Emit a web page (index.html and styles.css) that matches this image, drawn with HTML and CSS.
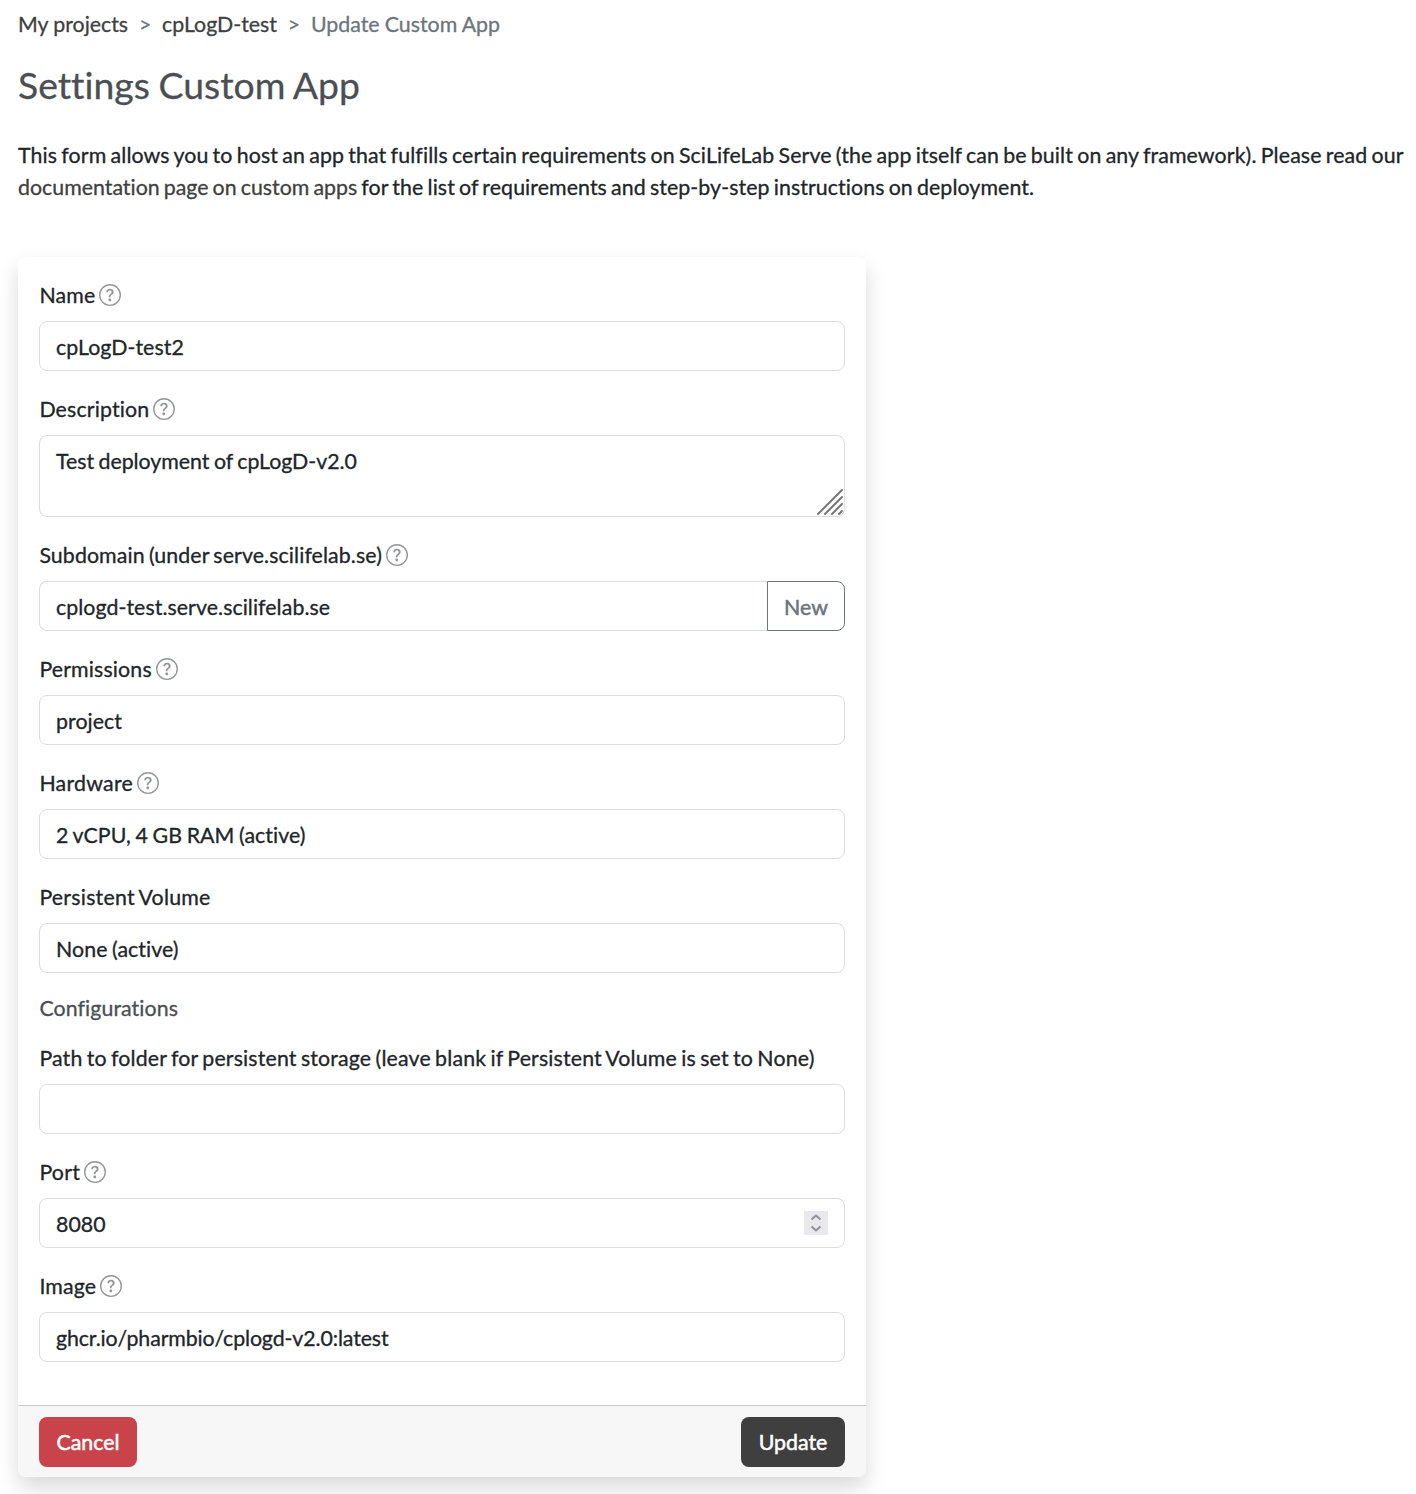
FILE: index.html
```html
<!DOCTYPE html>
<html lang="en">
<head>
<meta charset="utf-8">
<title>Update Custom App</title>
<link rel="stylesheet" href="styles.css">
</head>
<body>
<svg width="0" height="0" class="defs">
  <symbol id="help" viewBox="0 0 16 16">
    <path d="M8 15A7 7 0 1 1 8 1a7 7 0 0 1 0 14m0 1A8 8 0 1 0 8 0a8 8 0 0 0 0 16"/>
    <path d="M5.255 5.786a.237.237 0 0 0 .241.247h.825c.138 0 .248-.113.266-.25.09-.656.54-1.134 1.342-1.134.686 0 1.314.343 1.314 1.168 0 .635-.374.927-.965 1.371-.673.489-1.206 1.06-1.168 1.987l.003.217a.25.25 0 0 0 .25.246h.811a.25.25 0 0 0 .25-.25v-.105c0-.718.273-.927 1.01-1.486.609-.463 1.244-.977 1.244-2.056 0-1.511-1.276-2.241-2.673-2.241-1.267 0-2.655.59-2.75 2.286m1.557 5.763c0 .533.425.927 1.01.927.609 0 1.028-.394 1.028-.927 0-.552-.42-.94-1.029-.94-.584 0-1.009.388-1.009.94"/>
  </symbol>
</svg>
<nav class="breadcrumb"><a>My projects</a><span class="sep">&gt;</span><a>cpLogD-test</a><span class="sep">&gt;</span><span>Update Custom App</span></nav>
<h1>Settings Custom App</h1>
<p class="intro">This form allows you to host an app that fulfills certain requirements on SciLifeLab Serve (the app itself can be built on any framework). Please read our<br><a>documentation page on custom apps</a><span class="rest"> for the list of requirements and step-by-step instructions on deployment.</span></p>
<main class="card">
  <div class="card-body">
    <div class="field"><div class="label">Name<svg class="help"><use href="#help"/></svg></div><div class="control">cpLogD-test2</div></div>
    <div class="field"><div class="label">Description<svg class="help"><use href="#help"/></svg></div><div class="control area">Test deployment of cpLogD-v2.0<svg class="grip" viewBox="0 0 28 28"><path d="M2 26 26 2M9 26 26 9M16 26 26 16M23 26 26 23"/></svg></div></div>
    <div class="field"><div class="label domain">Subdomain (under serve.scilifelab.se)<svg class="help"><use href="#help"/></svg></div><div class="group"><div class="control">cplogd-test.serve.scilifelab.se</div><div class="new">New</div></div></div>
    <div class="field"><div class="label">Permissions<svg class="help"><use href="#help"/></svg></div><div class="control">project</div></div>
    <div class="field"><div class="label short">Hardware<svg class="help"><use href="#help"/></svg></div><div class="control">2 vCPU, 4 GB RAM (active)</div></div>
    <div class="field"><div class="label short">Persistent Volume</div><div class="control">None (active)</div></div>
    <div class="section">Configurations</div>
    <div class="field"><div class="label">Path to folder for persistent storage (leave blank if Persistent Volume is set to None)</div><div class="control"></div></div>
    <div class="field"><div class="label short">Port<svg class="help"><use href="#help"/></svg></div><div class="control">8080<svg class="spin" viewBox="0 0 24 24"><path d="m7.500 8.500 4.500-4 4.500 4M7.500 15.500l4.500 4 4.500-4"/></svg></div></div>
    <div class="field"><div class="label">Image<svg class="help"><use href="#help"/></svg></div><div class="control path">ghcr.io/pharmbio/cplogd-v2.0:latest</div></div>
  </div>
  <footer class="card-footer"><div class="btn cancel">Cancel</div><div class="btn update">Update</div></footer>
</main>
</body>
</html>
```
FILE: styles.css
```css
* { box-sizing: border-box; }
body {
  margin: 0;
  padding: 8px 0 0 18px;
  height: 1494px;
  overflow: hidden;
  background: #fff;
  color: #212529;
  font: 21.333px/32px Lato, "Liberation Sans", sans-serif;
  -webkit-text-stroke: .3px currentColor;
}
.defs { position: absolute; }
svg { -webkit-text-stroke: 0; }
a { color: #3f3f3f; }
.breadcrumb { display: flex; height: 32px; color: #6c757d; word-spacing: -.2px; }
.sep { width: 34px; text-align: center; }
h1 {
  margin: 22px 0 0;
  font-size: 37.33px;
  line-height: 45px;
  font-weight: 400;
  color: #4b4f53;
  font-variant-ligatures: none;
  word-spacing: -.8px;
}
.intro { margin: 32px 0 0; white-space: nowrap; letter-spacing: .117px; word-spacing: -1.38px; }
.intro a { letter-spacing: .01px; }
.rest { letter-spacing: .085px; }
.card {
  width: 848px;
  height: 1220px;
  margin-top: 54px;
  display: flex;
  flex-direction: column;
  border-radius: 8px;
  background: #fff;
  box-shadow: 0 10.667px 21.333px rgba(0, 0, 0, .15);
}
.card-body { flex: 1; padding: 22px 21px 0; }
.field { margin-bottom: 22px; }
.label { display: flex; align-items: center; height: 32px; margin-bottom: 10px; padding-left: .4px; gap: 4px; white-space: nowrap; letter-spacing: .15px; word-spacing: -1.3px; }
.domain { letter-spacing: .1px; }
.short { letter-spacing: .24px; }
.help { width: 22px; height: 22px; fill: #949698; }
.control {
  height: 50px;
  padding: 9px 16px;
  border: 1px solid #dadcde;
  border-radius: 8px;
  display: flex;
  justify-content: space-between;
  letter-spacing: .06px;
  word-spacing: -.9px;
}
.path { letter-spacing: -.11px; }
.area { height: 82px; padding-right: 0; padding-bottom: 0; letter-spacing: -.03px; }
.grip { width: 28px; height: 28px; align-self: flex-end; fill: none; stroke: #757575; stroke-width: 2; stroke-linecap: round; }
.group { display: flex; }
.group .control { flex: 1; border-right: 0; border-radius: 8px 0 0 8px; }
.new { width: 78px; height: 50px; padding: 9px 0; border: 1px solid #6c757d; border-radius: 0 8px 8px 0; color: #6c757d; text-align: center; -webkit-text-stroke-width: .5px; }
.section { height: 26px; line-height: 26px; margin-bottom: 21px; padding-left: .4px; color: #4b4f53; letter-spacing: .08px; }
.spin { width: 24px; height: 24px; margin-top: 3px; background: #e9e9ed; fill: none; stroke: #8f8f9d; stroke-width: 2; }
.card-footer {
  height: 72px;
  padding: 11px 21px 0;
  display: flex;
  justify-content: space-between;
  border-top: 1px solid #c8cacc;
  border-radius: 0 0 8px 8px;
  background: #f7f7f7;
}
.btn { height: 50px; padding-top: 9px; border-radius: 8px; color: #fff; text-align: center; -webkit-text-stroke-width: .5px; }
.cancel { width: 98px; background: #c9444a; }
.update { width: 104px; background: #3f3f3f; }
```
